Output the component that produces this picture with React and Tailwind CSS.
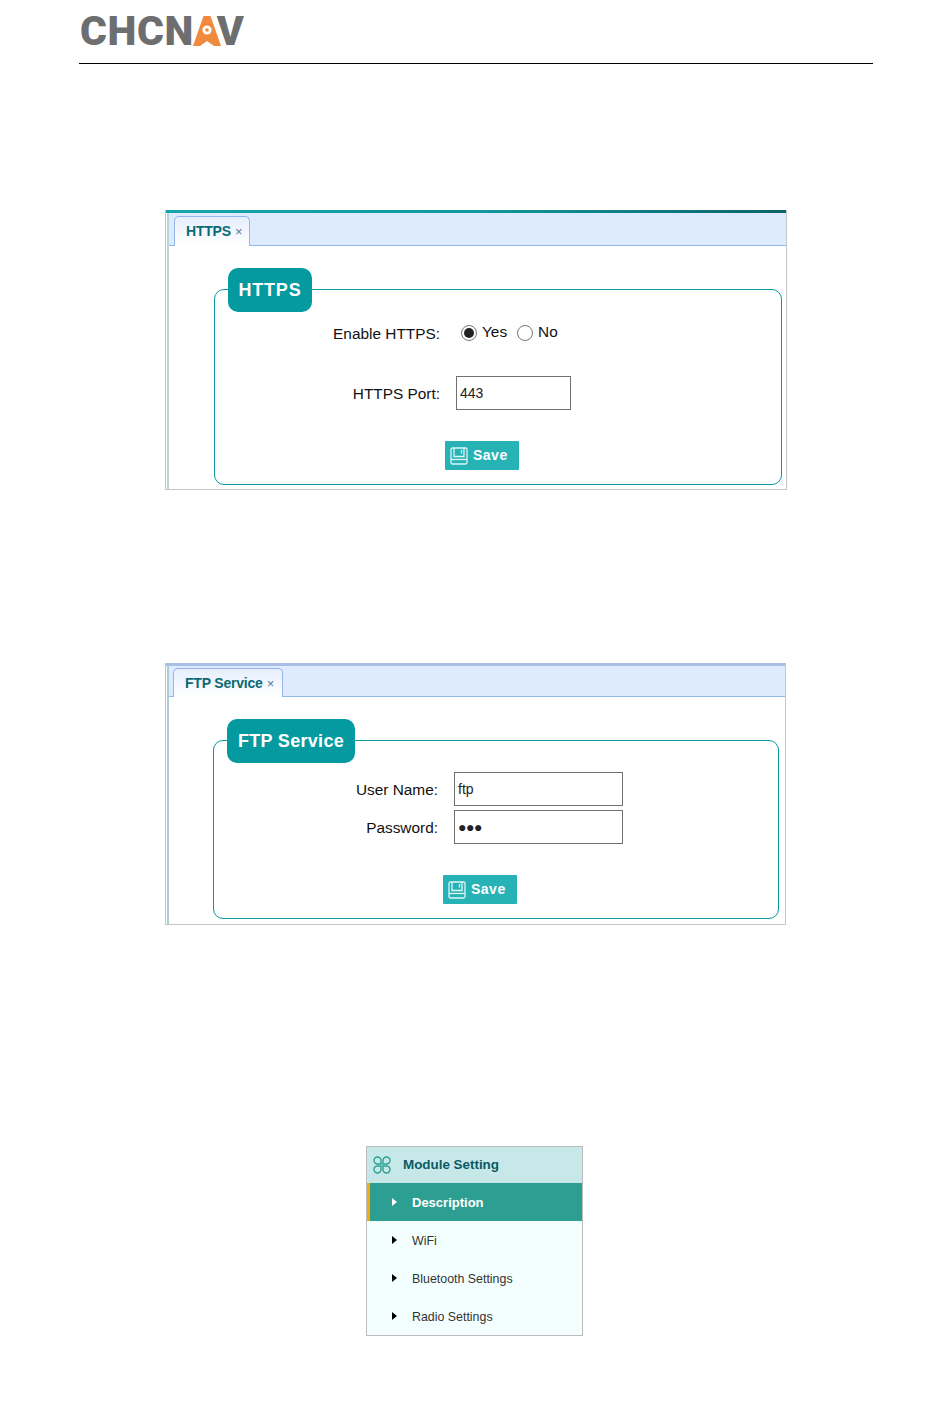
const sans = "font-['Liberation_Sans',Arial,sans-serif]";

function Logo() {
  return (
    <div className="flex h-[30px] items-center pl-[1px] font-['Roboto',sans-serif] text-[41px] font-black leading-none tracking-[0.6px] text-[#6d6e70]">
      <span>CHCN</span>
      <svg width="28" height="30" viewBox="0 0 28 30" className="-ml-[1px] shrink-0">
        <path d="M10.5 0 L17.5 0 L28 30 L21 30 L14 25 L7 30 L0 30 Z" fill="#f08a3c" />
        <circle cx="14" cy="14" r="4.6" fill="#fff" />
        <circle cx="14" cy="14" r="1.8" fill="#f08a3c" />
      </svg>
      <span className="-ml-[4px]">V</span>
    </div>
  );
}

function SaveIcon() {
  return (
    <svg width="18" height="18" viewBox="0 0 18 18" fill="none" stroke="#dff5f5" strokeWidth="1.3" className="shrink-0">
      <rect x="1" y="1" width="16" height="16" rx="1.5" />
      <path d="M4 1 V9.5 H14 V1" />
      <path d="M11.5 3 V6.5" />
      <path d="M1 12.5 H17" />
    </svg>
  );
}

function SaveButton({ className }) {
  return (
    <button className={`flex h-[29px] w-[74px] items-center gap-[5px] rounded-[1px] bg-[#27b2b6] pl-[5px] text-[14px] font-bold tracking-[0.5px] text-white ${className}`}>
      <SaveIcon />
      Save
    </button>
  );
}

function Radio({ checked }) {
  return (
    <span className="flex h-[16px] w-[16px] shrink-0 items-center justify-center rounded-full border border-[#767676] bg-white">
      {checked && <span className="h-[10px] w-[10px] rounded-full bg-[#222]" />}
    </span>
  );
}

function Label({ width, children }) {
  return <div className={`text-right text-[15.4px] text-[#111] ${width}`}>{children}</div>;
}

function TextBox({ className, children }) {
  return (
    <div className={`flex h-[34px] items-center border border-[#707070] bg-white pl-[3px] text-[14px] text-[#222] ${className}`}>
      {children}
    </div>
  );
}

function Tab({ className, children }) {
  return (
    <div className={`-mb-[1px] flex items-center gap-[4px] rounded-t-[5px] border border-b-0 border-[#95b6ea] bg-gradient-to-b from-[#e6effd] to-white pl-[11px] ${className}`}>
      <span className="text-[14px] font-bold tracking-[-0.2px] text-[#0b6a74]">{children}</span>
      <span className="text-[13px] leading-none text-[#5a7a9a]">×</span>
    </div>
  );
}

function Legend({ className, children }) {
  return (
    <div className={`-mt-[22px] ml-[13px] flex h-[44px] items-center justify-center rounded-[10px] bg-[#049a9f] text-[18px] font-bold text-white ${className}`}>
      {children}
    </div>
  );
}

function HttpsCard() {
  return (
    <div className="ml-[165px] flex h-[280px] w-[622px] flex-col border border-t-0 border-[#c6c6c6] bg-white">
      <div className="h-[3px] bg-gradient-to-r from-[#15a5aa] via-[#12999e] to-[#0b6468]" />
      <div className="ml-[1px] flex flex-1 flex-col border-l-2 border-[#b5d9d9]">
        <div className="flex h-[33px] items-end border-b border-[#95b6ea] bg-[#deeafd]">
          <Tab className="ml-[5px] h-[30px] w-[76px]">HTTPS</Tab>
        </div>
        <div className="pl-[45px] pr-[4px] pt-[43px]">
          <div className="h-[196px] rounded-[10px] border border-[#059a9e]">
            <Legend className="w-[84px] tracking-[0.8px]">HTTPS</Legend>
            <div className="mt-[9px] flex items-center">
              <Label width="mt-[1px] w-[225px]">Enable HTTPS:</Label>
              <div className="ml-[21px] flex items-center text-[15.4px] text-[#111]">
                <Radio checked />
                <span className="ml-[5px] -mt-[3px]">Yes</span>
                <span className="ml-[10px]"><Radio /></span>
                <span className="ml-[5px] -mt-[3px]">No</span>
              </div>
            </div>
            <div className="mt-[31px] flex items-center">
              <Label width="w-[225px]">HTTPS Port:</Label>
              <TextBox className="ml-[16px] w-[115px]">443</TextBox>
            </div>
            <SaveButton className="ml-[230px] mt-[31px]" />
          </div>
        </div>
      </div>
    </div>
  );
}

function FtpCard() {
  return (
    <div className="ml-[165px] mt-[173px] flex h-[262px] w-[621px] flex-col border border-t-0 border-[#c6c6c6] bg-white">
      <div className="h-[3px] bg-[#a9c0e6]" />
      <div className="ml-[1px] flex flex-1 flex-col border-l-2 border-[#a9cfd2]">
        <div className="flex h-[31px] items-end border-b border-[#95b6ea] bg-[#deeafd]">
          <Tab className="ml-[4px] h-[29px] w-[110px]">FTP Service</Tab>
        </div>
        <div className="pl-[44px] pr-[6px] pt-[43px]">
          <div className="h-[179px] rounded-[10px] border border-[#059a9e]">
            <Legend className="w-[128px] tracking-[0.3px]">FTP Service</Legend>
            <div className="mt-[9px] flex items-center">
              <Label width="mt-[1px] w-[224px]">User Name:</Label>
              <TextBox className="ml-[16px] w-[169px]">ftp</TextBox>
            </div>
            <div className="mt-[4px] flex items-center">
              <Label width="mt-[1px] w-[224px]">Password:</Label>
              <TextBox className="ml-[16px] w-[169px] tracking-[-0.5px]">●●●</TextBox>
            </div>
            <SaveButton className="ml-[229px] mt-[31px]" />
          </div>
        </div>
      </div>
    </div>
  );
}

function MenuItem({ active, children }) {
  return (
    <div className={`flex h-[38px] items-center ${active ? 'border-l-[3px] border-[#f5ab0a] bg-[#2d9f92] pl-[22px] text-[13px] font-bold text-white' : 'pl-[25px] text-[12.4px] text-[#333]'}`}>
      <span className={`h-0 w-0 border-y-[4px] border-l-[5px] border-y-transparent ${active ? 'border-l-white' : 'border-l-black'}`} />
      <span className="ml-[15px] mt-[2px]">{children}</span>
    </div>
  );
}

function ModuleMenu() {
  return (
    <div className="ml-[366px] mt-[221px] w-[217px] border border-[#bdbdbd] bg-[#f3fffe]">
      <div className="flex h-[36px] items-center bg-[#c7e8e8] pl-[6px]">
        <svg width="18" height="18" viewBox="0 0 18 18" fill="none" stroke="#2d9f92" strokeWidth="1.4">
          <path d="M8 8 H4.5 A3.5 3.5 0 1 1 8 4.5 Z" />
          <path d="M10 8 H13.5 A3.5 3.5 0 1 0 10 4.5 Z" />
          <path d="M8 10 H4.5 A3.5 3.5 0 1 0 8 13.5 Z" />
          <path d="M10 10 H13.5 A3.5 3.5 0 1 1 10 13.5 Z" />
        </svg>
        <span className="ml-[12px] text-[13.4px] font-bold text-[#0b5a66]">Module Setting</span>
      </div>
      <MenuItem active>Description</MenuItem>
      <MenuItem>WiFi</MenuItem>
      <MenuItem>Bluetooth Settings</MenuItem>
      <MenuItem>Radio Settings</MenuItem>
    </div>
  );
}

export default function App() {
  return (
    <div className={`h-[1419px] w-[950px] overflow-hidden bg-white ${sans}`}>
      <div className="ml-[79px] w-[794px] border-b border-black pb-[17px] pt-[16px]">
        <Logo />
      </div>
      <div className="mt-[146px]">
        <HttpsCard />
      </div>
      <FtpCard />
      <ModuleMenu />
    </div>
  );
}
